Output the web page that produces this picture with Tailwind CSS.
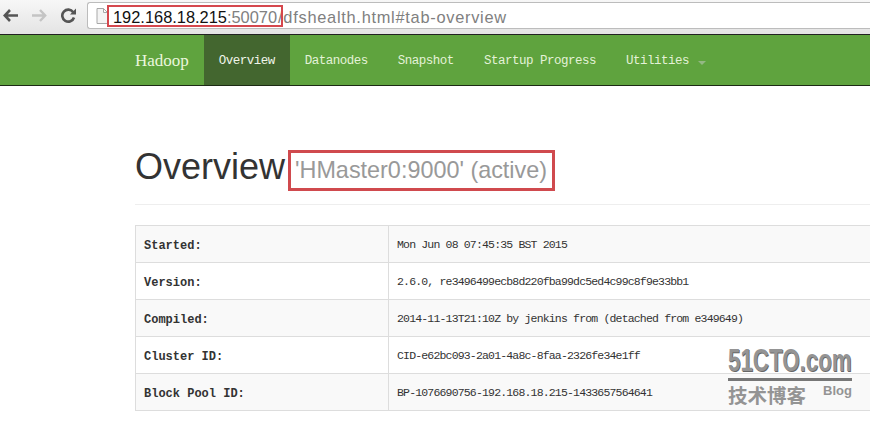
<!DOCTYPE html>
<html lang="en">
<head>
  <meta charset="UTF-8" />
  <title>Namenode information</title>
  <script src="https://cdn.jsdelivr.net/npm/@tailwindcss/browser@4"></script>
</head>
<body class="relative w-[870px] h-[421px] overflow-hidden bg-white font-['Liberation_Sans',sans-serif]">

  <!-- browser toolbar -->
  <div class="flex items-start h-[35px] pt-[2px] bg-gradient-to-b from-[#f7f7f7] to-[#e4e4e4] border-b border-[#222]">
    <div class="flex items-center w-[87px] h-[27px] pl-[3px] gap-[14px] shrink-0">
      <svg class="w-[15px] h-[13px]" viewBox="0 0 15 13" fill="none" stroke="#555" stroke-width="2.6"><path d="M7 1 L1.8 6.5 L7 12 M2 6.5 H15"/></svg>
      <svg class="w-[15px] h-[13px]" viewBox="0 0 15 13" fill="none" stroke="#c4c4c4" stroke-width="2.4"><path d="M8 1 L13.2 6.5 L8 12 M13 6.5 H0"/></svg>
      <svg class="w-[15px] h-[15px]" viewBox="0 0 15 15" fill="none"><path d="M12.2 4.2 A6 6 0 1 0 13 9.5" stroke="#555" stroke-width="2.6"/><path d="M9 6.5 H15 V0.5 Z" fill="#555"/></svg>
    </div>
    <div class="flex items-center flex-1 h-[27px] pl-[8px] bg-white border border-[#bcbcbc] border-r-0 rounded-l-[3px]">
      <svg class="w-[12px] h-[16px] shrink-0" viewBox="0 0 12 16" fill="#f4f4f4" stroke="#a8a8a8"><path d="M1 .5 H7.5 L11.5 4.5 V15.5 H1 Z M7.5 .5 V4.5 H11.5"/></svg>
      <div class="ml-[5px] pt-[2px] text-[16.4px] leading-[24px] whitespace-nowrap text-[#808080]"><span class="text-[#111]">192.168.18.215</span>:50070<span class="ml-[1px] tracking-[0.72px]">/dfshealth.html#tab-overview</span></div>
    </div>
  </div>

  <!-- navbar -->
  <nav class="flex h-[51px] pl-[135px] bg-[#5fa33e] border-b border-[#1c2a14] text-[#e4f2d8] font-['Liberation_Mono',monospace] text-[12.5px] tracking-[-0.5px]">
    <a class="flex items-center pt-[1px] pr-[15px] font-['Liberation_Serif',serif] text-[17px] tracking-normal text-[#eaf6dc]">Hadoop</a>
    <a class="flex items-center pt-[3px] px-[15px] bg-[#43662f] text-[#f0f5ea]">Overview</a>
    <a class="flex items-center pt-[3px] px-[15px]">Datanodes</a>
    <a class="flex items-center pt-[3px] px-[15px]">Snapshot</a>
    <a class="flex items-center pt-[3px] px-[15px]">Startup Progress</a>
    <a class="flex items-center pt-[3px] pl-[15px]">Utilities<span class="ml-[9px] mt-[2px] w-0 h-0 border-x-[4px] border-x-transparent border-t-[4px] border-t-[#94b884]"></span></a>
  </nav>

  <!-- content -->
  <main class="pl-[135px]">
    <div class="h-[119px] pt-[61px] border-b border-[#eeeeee]">
      <h1 class="text-[36px] leading-[40px] text-[#333] whitespace-nowrap">Overview <small class="align-[1px] text-[23.4px] text-[#999]">'HMaster0:9000' (active)</small></h1>
    </div>
    <table class="mt-[20px] w-[760px] table-fixed border-collapse font-['Liberation_Mono',monospace] text-[#333]">
      <tbody class="text-[11.5px] tracking-[-0.83px]">
        <tr class="h-[37px] bg-[#f9f9f9]">
          <th class="w-[253px] pl-[8px] pt-[3px] text-left border border-[#dddddd] text-[12px] tracking-normal">Started:</th>
          <td class="pl-[8px] pt-[2px] border border-[#dddddd]">Mon Jun 08 07:45:35 BST 2015</td>
        </tr>
        <tr class="h-[37px]">
          <th class="pl-[8px] pt-[3px] text-left border border-[#dddddd] text-[12px] tracking-normal">Version:</th>
          <td class="pl-[8px] pt-[2px] border border-[#dddddd]">2.6.0, re3496499ecb8d220fba99dc5ed4c99c8f9e33bb1</td>
        </tr>
        <tr class="h-[37px] bg-[#f9f9f9]">
          <th class="pl-[8px] pt-[3px] text-left border border-[#dddddd] text-[12px] tracking-normal">Compiled:</th>
          <td class="pl-[8px] pt-[2px] border border-[#dddddd]">2014-11-13T21:10Z by jenkins from (detached from e349649)</td>
        </tr>
        <tr class="h-[37px]">
          <th class="pl-[8px] pt-[3px] text-left border border-[#dddddd] text-[12px] tracking-normal">Cluster ID:</th>
          <td class="pl-[8px] pt-[2px] border border-[#dddddd]">CID-e62bc093-2a01-4a8c-8faa-2326fe34e1ff</td>
        </tr>
        <tr class="h-[37px] bg-[#f9f9f9]">
          <th class="pl-[8px] pt-[3px] text-left border border-[#dddddd] text-[12px] tracking-normal">Block Pool ID:</th>
          <td class="pl-[8px] pt-[2px] border border-[#dddddd]">BP-1076690756-192.168.18.215-1433657564641</td>
        </tr>
      </tbody>
    </table>
  </main>

  <!-- red annotation boxes -->
  <div class="absolute left-[107px] top-[5px] w-[176px] h-[22px] border-[2.5px] border-[#d5474d]"></div>
  <div class="absolute left-[288px] top-[150px] w-[267px] h-[41px] border-[3px] border-[#d04a4e]"></div>

  <!-- watermark -->
  <div class="absolute left-[728px] top-[344px] w-[124px] text-[#949494]">
    <div class="w-[124px] text-[31px] leading-[34px] font-bold whitespace-nowrap origin-left scale-x-[0.72] [text-shadow:1px_1px_0_#666]">51CTO.com</div>
    <div class="h-[3px] bg-[#777]"></div>
    <div class="flex items-start justify-between mt-[2px]">
      <span class="text-[19.5px] leading-[24px] font-bold font-['Noto_Sans_CJK_SC',sans-serif]">技术博客</span>
      <span class="text-[13px] leading-[15px] font-bold">Blog</span>
    </div>
  </div>
</body>
</html>
